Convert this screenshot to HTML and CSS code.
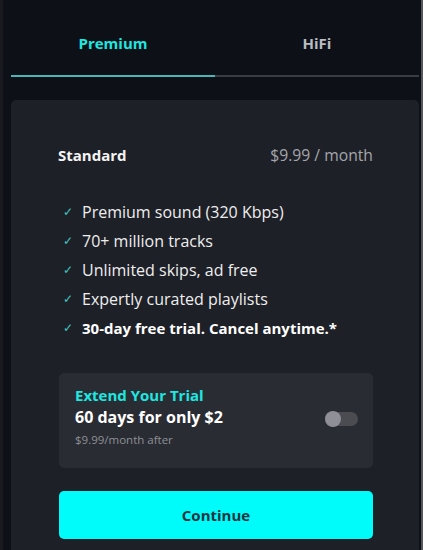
FILE: index.html
```html
<!DOCTYPE html>
<html>
<head>
<meta charset="utf-8">
<link rel="stylesheet" href="styles.css">
</head>
<body>
<div class="screen">
  <div class="tabs">
    <div class="tab active">Premium</div>
    <div class="tab">HiFi</div>
  </div>
  <div class="card">
    <div class="plan">
      <span class="plan-name">Standard</span>
      <span class="plan-price">$9.99 / month</span>
    </div>
    <ul class="features">
      <li><span class="check">&#10003;</span>Premium sound (320 Kbps)</li>
      <li><span class="check">&#10003;</span>70+ million tracks</li>
      <li><span class="check">&#10003;</span>Unlimited skips, ad free</li>
      <li><span class="check">&#10003;</span>Expertly curated playlists</li>
      <li class="strong"><span class="check">&#10003;</span>30-day free trial. Cancel anytime.*</li>
    </ul>
    <div class="trial">
      <div class="trial-text">
        <div class="trial-title">Extend Your Trial</div>
        <div class="trial-offer">60 days for only $2</div>
        <div class="trial-note">$9.99/month after</div>
      </div>
      <div class="toggle"><span class="knob"></span></div>
    </div>
    <button class="continue">Continue</button>
  </div>
</div>
</body>
</html>
```
FILE: styles.css
```css
* { box-sizing: border-box; }
html, body {
  margin: 0;
  padding: 0;
  background: #0d1016;
}
body {
  width: 423px;
  height: 550px;
  overflow: hidden;
  font-family: "Open Sans", "Noto Sans", sans-serif;
}
.screen {
  width: 423px;
  height: 550px;
  padding-left: 8px;
  padding-right: 2px;
  border-left: 3px solid #181a20;
  border-right: 2px solid #55575d;
  display: flex;
  flex-direction: column;
}
.tabs {
  display: flex;
  height: 77px;
}
.tab {
  flex: 1;
  display: flex;
  align-items: center;
  justify-content: center;
  padding-top: 10px;
  font-weight: 700;
  font-size: 15px;
  color: #b9bcc2;
  border-bottom: 2px solid #393c43;
}
.tab.active {
  color: #1ee6e0;
  border-bottom-color: #4bb5b4;
}
.card {
  margin-top: 23px;
  flex: 1;
  background: #1e2027;
  border-radius: 5px 5px 0 0;
  padding: 45px 46px 0 47px;
  display: flex;
  flex-direction: column;
}
.plan {
  display: flex;
  justify-content: space-between;
  align-items: center;
  height: 20px;
}
.plan-name {
  color: #f4f4f4;
  font-weight: 700;
  font-size: 15px;
}
.plan-price {
  color: #a3a6ab;
  font-size: 15.7px;
}
.features {
  list-style: none;
  margin: 32px 0 0 0;
  padding: 0 0 0 4px;
}
.features li {
  height: 29px;
  display: flex;
  align-items: center;
  color: #eeeeee;
  font-size: 16px;
}
.features li.strong { font-weight: 700; color: #ffffff; font-size: 15px; }
.check {
  width: 20px;
  color: #40c4c0;
  font-size: 12px;
  font-weight: 400;
  padding-left: 1px;
}
.trial {
  margin-top: 31px;
  margin-left: 1px;
  height: 95px;
  background: #2a2c33;
  border-radius: 5px;
  padding: 12px 15px 0 16px;
  display: flex;
  align-items: flex-start;
  justify-content: space-between;
}
.trial-title {
  color: #1ee6e0;
  font-weight: 700;
  font-size: 15px;
  line-height: 20px;
}
.trial-offer {
  color: #ffffff;
  font-weight: 700;
  font-size: 16px;
  line-height: 24px;
}
.trial-note {
  color: #8d9096;
  font-size: 11.5px;
  line-height: 22px;
}
.toggle {
  margin-top: 27px;
  width: 33px;
  height: 14px;
  border-radius: 7px;
  background: #4a4c52;
  position: relative;
}
.knob {
  position: absolute;
  left: 0;
  top: -1px;
  width: 16px;
  height: 16px;
  border-radius: 50%;
  background: #8f9097;
}
.continue {
  margin-top: 23px;
  margin-left: 1px;
  height: 48px;
  border: none;
  border-radius: 5px;
  background: #00fbfb;
  color: #1e3440;
  font-family: inherit;
  font-weight: 700;
  font-size: 15px;
}
```
